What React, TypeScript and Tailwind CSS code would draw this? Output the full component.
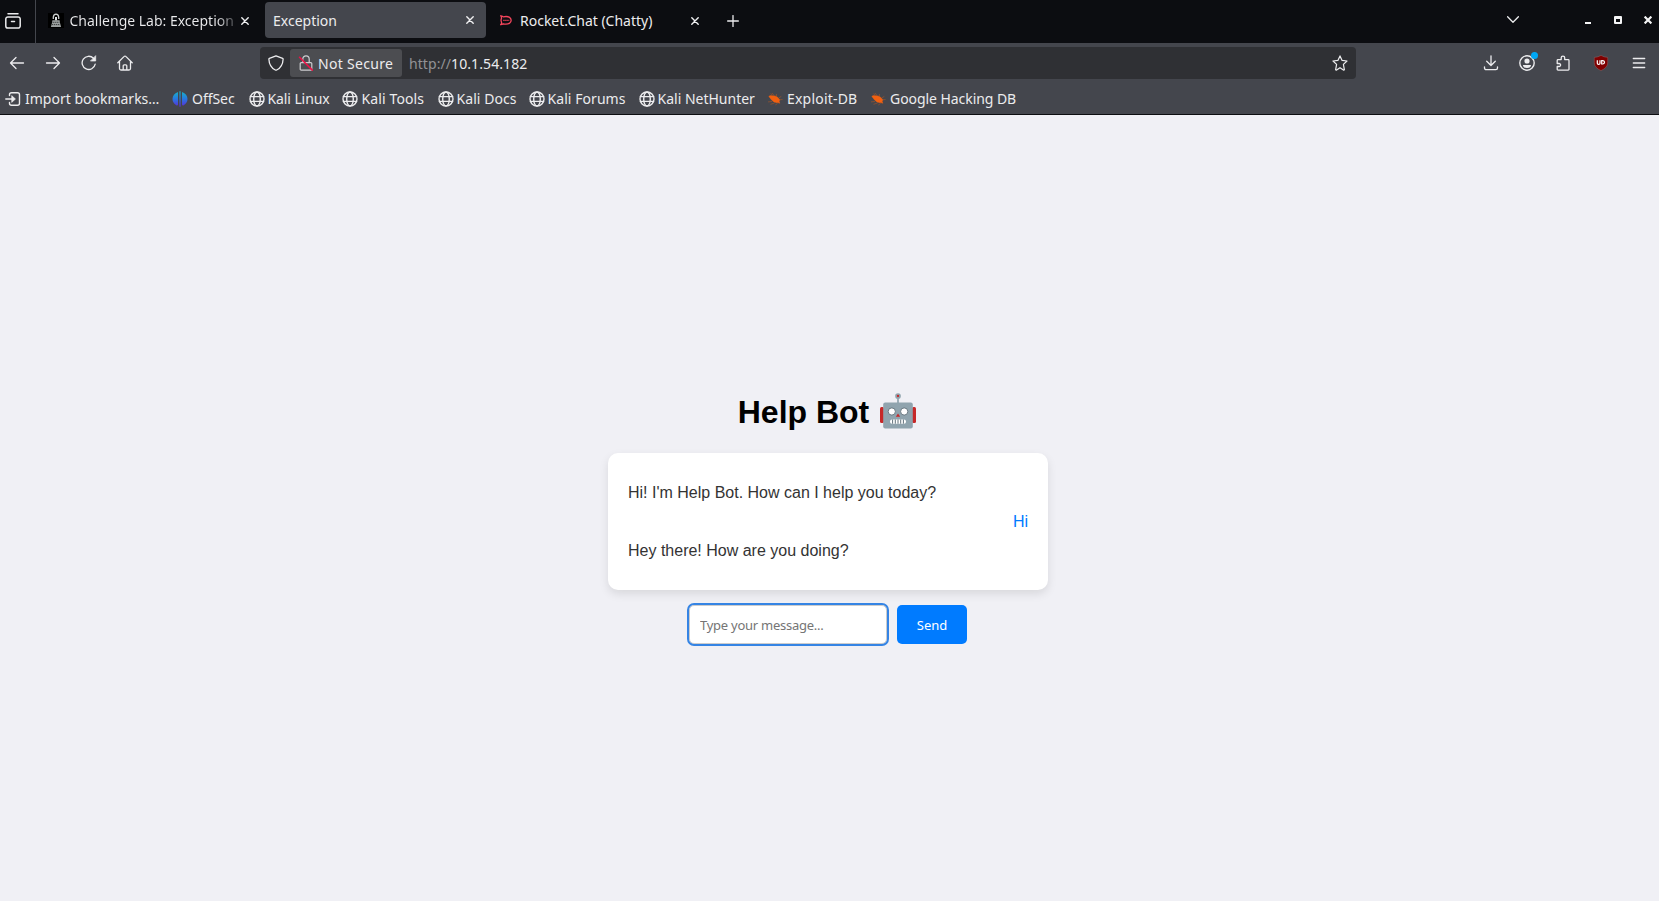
import React, { useState } from "react";

type IconProps = { className?: string };

function Svg({ className = "", children, box = "0 0 16 16", w = 1.3 }: { className?: string; children: React.ReactNode; box?: string; w?: number }) {
  return (
    <svg className={"block size-4 shrink-0 " + className} viewBox={box} fill="none" stroke="#ececee" strokeWidth={w} strokeLinecap="round" strokeLinejoin="round">
      {children}
    </svg>
  );
}

const CloseIcon = ({ className = "" }: IconProps) => (
  <svg className={"block size-2 shrink-0 " + className} viewBox="0 0 8 8" stroke="#f0f0f2" strokeWidth="1.4" strokeLinecap="round">
    <path d="M.8.8l6.4 6.4M7.2.8L.8 7.2" />
  </svg>
);

const RecentIcon = () => (
  <Svg w={1.5}>
    <path d="M3 .8h10M2.9 3.9h10.2a2.1 2.1 0 0 1 2.1 2.1v7a2.1 2.1 0 0 1-2.1 2.1H2.9A2.1 2.1 0 0 1 .8 13V6a2.1 2.1 0 0 1 2.1-2.1zM6.500 8.500h3" />
  </Svg>
);

const LabIcon = () => (
  <svg className="block h-[15px] w-4 shrink-0" viewBox="0 0 16 15">
    <path fill="#000" d="M0 0h16v15H0z" />
    <path d="M5.300 6V4.300Q5.400 1.500 8 1.200q2.600.3 2.700 3.100V6" fill="none" stroke="#c9cccc" strokeWidth="1.3" />
    <path d="M7 4h2v3.400H7z" fill="#dfe2e2" />
    <path d="M4.400 7.300h7.200l.5 3 1 3.700H2.900l1-3.700z" fill="#9da1a1" />
    <path d="M4.600 9.300h6.800M4 11.600h8" stroke="#2c3030" strokeWidth=".9" strokeDasharray="1.300 .7" />
  </svg>
);

const RocketIcon = () => (
  <svg className="block h-[11px] w-3 shrink-0" viewBox="0 0 12 11" fill="none" stroke="#f5455c">
    <path d="M.7.900Q2.200.9 3.200 1.900Q7.200.9 9.700 2.500Q12.600 5.300 9.700 8.100Q7.200 9.700 3.200 8.800Q2 9.800.6 9.700Q2 8.300 1.500 7.200Q.6 5.300 1.500 3.400Q1.700 2 .7.900z" strokeWidth="1.300" />
    <path d="M3.300 5.400h6.200" strokeWidth="1.400" strokeDasharray="1.300 .7" />
  </svg>
);

const GlobeIcon = () => (
  <Svg w={1.4}>
    <circle cx="8" cy="8" r="7" />
    <ellipse cx="8" cy="8" rx="3.300" ry="7" />
    <path d="M1.300 5.700h13.400M1.300 10.300h13.400" strokeWidth="1.200" />
  </Svg>
);

const ImportIcon = () => (
  <Svg w={1.4}>
    <path d="M4.500 4.500V3.700a2 2 0 0 1 2-2h6a2 2 0 0 1 2 2v8.600a2 2 0 0 1-2 2h-6a2 2 0 0 1-2-2v-.8M.8 8h7.400" />
    <path d="M7 4.900L10.400 8L7 11.100z" fill="#ececee" strokeWidth=".8" />
  </Svg>
);

const OffsecIcon = () => (
  <svg className="block size-4 shrink-0" viewBox="0 0 16 16">
    <defs>
      <linearGradient id="offsec" x1="0" y1="0" x2="0" y2="1">
        <stop offset="0" stopColor="#16b4c4" />
        <stop offset=".5" stopColor="#2878e0" />
        <stop offset="1" stopColor="#5b2bd8" />
      </linearGradient>
    </defs>
    <path fill="url(#offsec)" d="M6 1v12.500Q5.600 15 4.300 14.200Q.6 12 .5 8Q.6 3.200 6 1zM10 1v12.500q.4 1.500 1.700.7Q15.400 12 15.500 8Q15.400 3.200 10 1zM7.400.3h1.200v15.400H7.400z" />
  </svg>
);

const BugIcon = () => (
  <svg className="block size-4 shrink-0" viewBox="0 0 16 16" fill="none" stroke="#9a542c" strokeWidth=".7">
    <path d="M5 4.500L3.800 2.500M7 4.500L5 2M9.500 5.300L9.400 3M11.700 7l2.600-1.600M12.400 8.600h3.200M5 10.500l-4 .4M7.500 12l-4 1.300M10.500 12.500L8.300 14" />
    <path d="M1.800 5.400Q3 4.100 5 4.800Q8.600 4.200 10.900 6.500L12.600 8.600Q13 9.800 12.200 10.400L12.800 12.300L10.800 11.600Q7 12 4.600 9Q3.600 7.400 1.800 5.400z" fill="#f26010" stroke="#f26010" strokeWidth=".4" />
  </svg>
);

const bookmarks = [
  { label: "Import bookmarks…", icon: ImportIcon, box: "w-[167px] gap-[4px]", text: "" },
  { label: "OffSec", icon: OffsecIcon, box: "w-[76.500px] gap-1", text: "tracking-[-0.05px]" },
  { label: "Kali Linux", icon: GlobeIcon, box: "w-[93px] gap-[3px]", text: "tracking-[-0.1px]" },
  { label: "Kali Tools", icon: GlobeIcon, box: "w-[96px] gap-1", text: "tracking-[0.12px]" },
  { label: "Kali Docs", icon: GlobeIcon, box: "w-[91px] gap-[3px]", text: "tracking-[0.06px]" },
  { label: "Kali Forums", icon: GlobeIcon, box: "w-[110px] gap-[3px]", text: "tracking-[0.06px]" },
  { label: "Kali NetHunter", icon: GlobeIcon, box: "w-[128.500px] gap-[3px]", text: "" },
  { label: "Exploit-DB", icon: BugIcon, box: "w-[103px] gap-1", text: "tracking-[0.2px]" },
  { label: "Google Hacking DB", icon: BugIcon, box: "w-[150px] gap-1", text: "tracking-[-0.06px]" },
];

function TabStrip() {
  return (
    <div className="flex h-[43px] items-center bg-[#0c0d11] text-[14px] leading-5 text-[#ececee]">
      <div className="flex h-full w-9 shrink-0 items-center border-r border-[#44464d] pl-[5px] pb-[2px]">
        <RecentIcon />
      </div>
      <div className="flex h-9 w-[229px] shrink-0 items-center pl-3 pb-[2px]">
        <LabIcon />
        <div className="ml-[5.500px] w-[163.500px] overflow-hidden whitespace-nowrap bg-linear-to-r from-[#ececee] from-90% to-[#55565a] bg-clip-text text-transparent">Challenge Lab: Exception</div>
        <CloseIcon className="ml-2" />
      </div>
      <div className="mb-[3px] flex h-9 w-[221px] shrink-0 items-center justify-between rounded bg-[#44464d] pl-2 pr-3">
        <span className="pt-px">Exception</span>
        <CloseIcon />
      </div>
      <div className="flex h-9 w-[213px] shrink-0 items-center pl-[14px] pb-[2px]">
        <RocketIcon />
        <span className="ml-2 w-[171px] shrink-0 whitespace-nowrap">Rocket.Chat (Chatty)</span>
        <CloseIcon />
      </div>
      <svg className="mb-[2px] ml-[27.500px] size-3" viewBox="0 0 12 12" stroke="#ececee" strokeWidth="1.300" strokeLinecap="round">
        <path d="M6 .6v10.800M.6 6h10.800" />
      </svg>
      <svg className="mb-1 ml-auto mr-[66px] h-[7px] w-3" viewBox="0 0 12 7" fill="none" stroke="#ececee" strokeWidth="1.300" strokeLinecap="round" strokeLinejoin="round">
        <path d="M.6.8L6 6.200L11.400.8" />
      </svg>
      <div className="mb-[3px] flex h-2 w-[74px] items-center">
        <span className="mr-[23px] h-[2px] w-[6px] self-end bg-[#f4f4f5]" />
        <span className="mr-[22px] size-2 rounded-[1px] border-x-2 border-b-2 border-t-[3px] border-[#f4f4f5]" />
        <svg className="size-2" viewBox="0 0 8 8" stroke="#f4f4f5" strokeWidth="2.200">
          <path d="M.6.6l6.800 6.800M7.400.6L.6 7.400" />
        </svg>
      </div>
    </div>
  );
}

function AddressBar() {
  return (
    <div className="flex h-10 items-center text-[14px] leading-5 text-[#ececee]">
      <div className="flex w-[260px] shrink-0 items-center gap-5 pl-[9px]">
        <Svg><path d="M14.500 8H1.500M7 2.500L1.500 8L7 13.500" /></Svg>
        <Svg><path d="M1.500 8h13M9 2.500L14.500 8L9 13.500" /></Svg>
        <Svg>
          <path d="M14.200 9.200A6.600 6.600 0 1 1 12.500 3.300" />
          <path d="M14.700 1v5H9.800z" fill="#ececee" strokeWidth=".7" />
        </Svg>
        <Svg className="-ml-[0.500px]">
          <path d="M.8 7.700L7.200 1.400a1.100 1.100 0 0 1 1.600 0l6.400 6.300M2.500 6.300v7.200a1.500 1.500 0 0 0 1.500 1.500h8a1.500 1.500 0 0 0 1.500-1.500V6.300M6.200 15v-4.200a1 1 0 0 1 1-1h1.600a1 1 0 0 1 1 1V15" />
        </Svg>
      </div>
      <div className="flex h-8 w-[1096px] shrink-0 items-center rounded bg-[#2f3034] pl-2 pr-2">
        <Svg>
          <path d="M8 .8L14.600 3.300a.9.9 0 0 1 .5.9C14.900 8.700 12.600 13 8.700 15a1.500 1.500 0 0 1-1.400 0C3.400 13 1.100 8.700.9 4.200a.9.9 0 0 1 .5-.9z" />
        </Svg>
        <div className="ml-[6px] flex h-7 w-28 shrink-0 items-center rounded-[3px] bg-[#4c4d51] pl-2">
          <Svg>
            <path d="M3.200 7.600h9.600a1 1 0 0 1 1 1v5.600a1 1 0 0 1-1 1H3.200a1 1 0 0 1-1-1V8.600a1 1 0 0 1 1-1zM4.800 7.600V4a3.200 3.200 0 0 1 6.400 0v3.600" stroke="#cdcdd0" strokeWidth="1.200" />
            <path d="M1.500 2.300l12.800 12.800" stroke="#ee1146" strokeWidth="1.500" />
          </Svg>
          <span className="ml-1 whitespace-nowrap pt-px tracking-[0.3px]">Not Secure</span>
        </div>
        <div className="ml-[7px] flex whitespace-nowrap pt-px tracking-[0.08px]">
          <span className="text-[#929295]">http://</span>
          <span>10.1.54.182</span>
        </div>
        <Svg className="ml-auto" w={1.2}>
          <path d="M8 .9l2.100 4.500 4.900.6-3.600 3.400.9 4.900a.6.6 0 0 1-.9.700L8 12.700 4.600 15a.6.6 0 0 1-.9-.700l.9-4.900L1 6l4.900-.6z" />
        </Svg>
      </div>
      <div className="ml-auto flex items-center gap-5 pr-3">
        <Svg><path d="M8 .8v9.400M3.700 6.300L8 10.500l4.300-4.200M1.500 11.800v1.200a1.700 1.700 0 0 0 1.700 1.700h9.600a1.700 1.700 0 0 0 1.700-1.700v-1.200" /></Svg>
        <div className="relative">
          <Svg w={1.4}>
            <circle cx="8" cy="8" r="7.200" />
            <circle cx="8" cy="6" r="2.600" fill="#ececee" stroke="none" />
            <path d="M4 10h8q0 3-4 3t-4-3z" fill="#ececee" stroke="none" />
          </Svg>
          <span className="absolute -right-[3px] -top-[3px] size-[7px] rounded-full bg-[#00a8f5]" />
        </div>
        <Svg>
          <path d="M2.200 6.200V5.400a.8.8 0 0 1 .8-.8h3.200V2.800a1.700 1.700 0 0 1 3.500 0v1.800h3.500a.8.8 0 0 1 .8.8v8.900a.8.8 0 0 1-.8.8H3a.8.8 0 0 1-.8-.8v-2.800h1.900a1.500 1.500 0 0 0 0-3H2.200z" />
        </Svg>
        <svg className="ml-[2px] block size-4" viewBox="0 0 16 16" fill="none">
          <path fill="#800000" stroke="#a36a6a" strokeWidth=".4" d="M8 .4Q11 2.200 14.700 2.400v5.400Q14.700 12.600 8 15.600Q1.300 12.600 1.300 7.800V2.400Q5 2.200 8 .4z" />
          <path d="M4.300 5.300v2.900q0 1.100 1.300 1.100t1.400-1.100V5.300" stroke="#fff" strokeWidth="1.200" />
          <path d="M8.700 5.600h1.200q1.600.2 1.600 1.700t-1.600 1.700H8.700z" stroke="#fff" strokeWidth="1.200" />
        </svg>
        <Svg className="ml-[2px]"><path d="M2.300 3.500h11.400M2.300 8h11.400M2.300 12.500h11.400" /></Svg>
      </div>
    </div>
  );
}

function BookmarksBar() {
  return (
    <div className="flex h-[31px] items-center pl-[5px] text-[14px] leading-5 text-[#ececee]">
      {bookmarks.map(({ label, icon: Icon, box, text }) => (
        <div key={label} className={"flex shrink-0 items-center " + box}>
          <Icon />
          <span className={"whitespace-nowrap " + text}>{label}</span>
        </div>
      ))}
    </div>
  );
}

const RobotIcon = () => (
  <svg className="block h-9 w-9" viewBox="0 0 36 36">
    <path d="M18 4v6" stroke="#90a4ae" strokeWidth="1.700" />
    <circle cx="18" cy="3" r="2" fill="#c62828" stroke="#90a4ae" strokeWidth="1.700" />
    <rect x="0" y="14" width="4" height="16" rx="1.500" fill="#c62828" />
    <rect x="32" y="14" width="4" height="16" rx="1.500" fill="#c62828" />
    <rect x="3.200" y="9.500" width="29.600" height="26" rx="2" fill="#90a4ae" />
    <circle cx="11.800" cy="18.500" r="3.600" fill="#fff" stroke="#62727b" strokeWidth=".9" />
    <circle cx="24.200" cy="18.500" r="3.600" fill="#fff" stroke="#62727b" strokeWidth=".9" />
    <path d="M18 20.500l2.200 3.300h-4.400z" fill="#c62828" />
    <rect x="10" y="26.500" width="16" height="4.200" rx="2" fill="#fff" />
    <path d="M12.600 26.500v4.200M15.300 26.500v4.200M18 26.500v4.200M20.700 26.500v4.200M23.400 26.500v4.200" stroke="#62727b" strokeWidth="1" />
  </svg>
);

function HelpBot() {
  const [draft, setDraft] = useState("");
  return (
    <main className="flex flex-1 flex-col items-center bg-[#f0f0f5] pr-[3px] pt-[278px] font-['Liberation_Sans',Arial,sans-serif]">
      <div className="flex h-[37px] items-start gap-[11px] pr-[2px]">
        <h1 className="pt-px text-[32px] font-bold leading-[37px] text-black">Help Bot</h1>
        <RobotIcon />
      </div>
      <section className="mt-[23px] flex h-[137px] w-[440px] flex-col justify-center gap-[11px] rounded-[10px] bg-white px-5 text-base leading-[18px] text-[#333] shadow-[0_4px_10px_rgba(0,0,0,0.1)]">
        <p>Hi! I'm Help Bot. How can I help you today?</p>
        <p className="text-right text-[#007bff]">Hi</p>
        <p>Hey there! How are you doing?</p>
      </section>
      <form className="mt-[15px] flex gap-[10px] font-['Noto_Sans',sans-serif] text-[13px]" onSubmit={(e) => e.preventDefault()}>
        <input
          className="h-[39px] w-[198px] rounded-[5px] border border-[#ccc] bg-white px-[10px] tracking-[-0.26px] outline-2 outline-[#3584e4] placeholder:text-[#757575]"
          placeholder="Type your message..."
          value={draft}
          onChange={(e) => setDraft(e.target.value)}
        />
        <button className="h-[39px] w-[70px] rounded-[5px] bg-[#007bff] pt-[2px] text-white">Send</button>
      </form>
    </main>
  );
}

export default function App() {
  return (
    <div className="flex h-[901px] w-[1659px] flex-col overflow-hidden font-['Noto_Sans',sans-serif]">
      <header className="h-[115px] shrink-0 border-b border-[#0c0d11] bg-[#44464d]">
        <TabStrip />
        <AddressBar />
        <BookmarksBar />
      </header>
      <HelpBot />
    </div>
  );
}
